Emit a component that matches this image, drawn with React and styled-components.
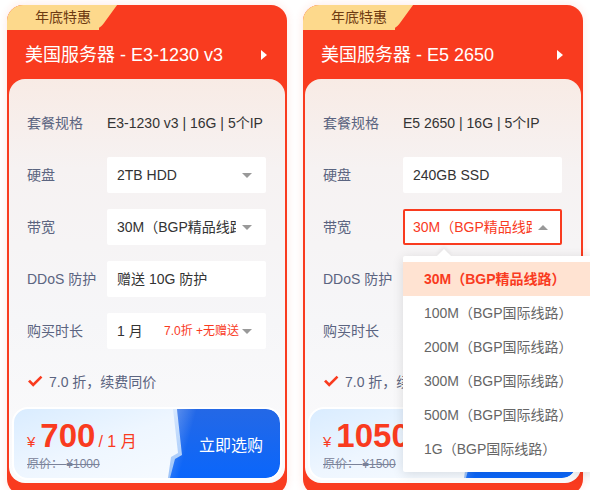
import styled, { createGlobalStyle } from "styled-components";

const GlobalStyle = createGlobalStyle`
  html, body {
    margin: 0;
    padding: 0;
    background: #fff;
    overflow: hidden;
  }
  body {
    font-family: "Liberation Sans", "Noto Sans CJK SC", sans-serif;
  }
`;

const RED = "#f93b1f";

const Page = styled.div`
  display: flex;
  align-items: flex-start;
  gap: 16px;
  padding: 5px 7px 0;
  width: 576px;
`;

const CardBox = styled.section`
  position: relative;
  flex: none;
  width: 280px;
  background: ${RED};
  border-radius: 16px;
  padding-bottom: 12px;
  box-shadow: 0 0 10px rgba(249, 59, 31, 0.12);
`;

const Tag = styled.div`
  position: relative;
  width: 92px;
  height: 25px;
  box-sizing: border-box;
  padding-left: 28px;
  background: #fdd98c;
  border-top-left-radius: 16px;
  color: #6e3b12;
  font-size: 14px;
  line-height: 25px;

  &::after {
    content: "";
    position: absolute;
    top: 0;
    right: -9px;
    width: 20px;
    height: 100%;
    background: #fdd98c;
    border-bottom-right-radius: 6px;
    transform: skewX(-36deg);
  }
  span {
    position: relative;
    z-index: 1;
  }
`;

const Header = styled.div`
  display: flex;
  align-items: center;
  justify-content: space-between;
  height: 49px;
  padding: 0 20px 0 18px;
`;

const Title = styled.h2`
  margin: 0;
  color: #fff;
  font-size: 18px;
  font-weight: 400;
  line-height: 1;
  white-space: nowrap;
`;

const HeaderArrow = styled.span`
  width: 0;
  height: 0;
  border-top: 5px solid transparent;
  border-bottom: 5px solid transparent;
  border-left: 6px solid #fff;
`;

const Panel = styled.div`
  margin: 0 2px;
  border-radius: 16px;
  padding-bottom: 3px;
  background: linear-gradient(180deg, #f8ebe5 0%, #f6f2f2 22%, #f6f6f8 60%, #fbfbfc 100%);
`;

const Body = styled.div`
  display: grid;
  grid-template-columns: minmax(0, 1fr);
  gap: 16px;
  padding: 26px 19px 0 18px;
`;

const Row = styled.div`
  display: flex;
  align-items: center;
  height: 36px;
  min-width: 0;
`;

const Label = styled.span`
  flex: none;
  width: 80px;
  color: #5b6480;
  font-size: 14px;
  line-height: 20px;
`;

const Spec = styled.span`
  color: #333;
  font-size: 14px;
  line-height: 20px;
  white-space: nowrap;
`;

const Select = styled.div`
  position: relative;
  flex: 1;
  min-width: 0;
  display: flex;
  align-items: center;
  height: 36px;
  box-sizing: border-box;
  padding: 0 12px 0 8px;
  background: #fff;
  border: 2px solid ${({ $active }) => ($active ? RED : "#fff")};
  border-radius: 2px;
  color: ${({ $active }) => ($active ? RED : "#333")};
  font-size: 14px;
  line-height: 20px;
`;

const SelectText = styled.span`
  flex: 1;
  min-width: 0;
  overflow: hidden;
  white-space: nowrap;
  margin-right: 6px;
`;

const Discount = styled.span`
  flex: none;
  color: ${RED};
  font-size: 12px;
  margin-right: 3px;
  white-space: nowrap;
`;

const Caret = styled.span`
  flex: none;
  width: 0;
  height: 0;
  border-left: 5px solid transparent;
  border-right: 5px solid transparent;
  ${({ $up }) =>
    $up ? "border-bottom: 5px solid #999;" : "border-top: 5px solid #999;"}
`;

const Dropdown = styled.ul`
  position: absolute;
  z-index: 10;
  top: calc(100% + 13px);
  left: -2px;
  width: 200px;
  margin: 0;
  padding: 6px 0;
  list-style: none;
  background: #fff;
  border-radius: 2px;
  box-shadow: 0 2px 12px rgba(0, 0, 0, 0.12);

  &::before {
    content: "";
    position: absolute;
    top: -5px;
    left: 36px;
    width: 10px;
    height: 10px;
    background: #fff;
    transform: rotate(45deg);
    box-shadow: -2px -2px 4px rgba(0, 0, 0, 0.05);
  }
`;

const Option = styled.li`
  position: relative;
  height: 34px;
  padding-left: 21px;
  line-height: 34px;
  font-size: 14px;
  white-space: nowrap;
  color: ${({ $selected }) => ($selected ? RED : "#666")};
  font-weight: ${({ $selected }) => ($selected ? 700 : 400)};
  background: ${({ $selected }) => ($selected ? "#ffe3d2" : "transparent")};
`;

const Note = styled.div`
  display: flex;
  align-items: center;
  gap: 6px;
  height: 20px;
  margin-top: 6px;
  color: #5b6480;
  font-size: 14px;
`;

const PriceBar = styled.div`
  display: flex;
  height: 73px;
  box-sizing: border-box;
  margin: 16px 3px 0;
  border: 2px solid #fff;
  border-radius: 16px;
  overflow: hidden;
  background: linear-gradient(160deg, #d9ecff 0%, #eef6ff 40%, #fbfdff 100%);
`;

const PriceInfo = styled.div`
  flex: 1;
  display: flex;
  flex-direction: column;
  justify-content: center;
  padding: 4px 0 0 13px;
`;

const PriceLine = styled.div`
  display: flex;
  align-items: baseline;
  color: ${RED};
  white-space: nowrap;
`;

const Yen = styled.span`
  font-size: 15px;
  margin-right: 5px;
`;

const Amount = styled.span`
  font-size: 33px;
  font-weight: 700;
  line-height: 34px;
`;

const Unit = styled.span`
  font-size: 16px;
  margin-left: 3px;
`;

const Original = styled.span`
  margin-top: 3px;
  color: #7a8299;
  font-size: 12px;
  line-height: 16px;
  text-decoration: line-through;
`;

const BuyButton = styled.button`
  position: relative;
  flex: none;
  width: 112px;
  border: 0;
  padding: 0 0 0 14px;
  background: transparent;
  color: #fff;
  font-family: inherit;
  font-size: 16px;
  border-radius: 0 14px 14px 0;
  overflow: hidden;

  &::before {
    content: "";
    position: absolute;
    inset: 0;
    background: linear-gradient(180deg, #d7e8ff 0%, #9cc3f8 100%);
    clip-path: polygon(5px 0, 30px 0, 12px 100%, 0 100%, 3px 48px, 10px 44px);
  }
  &::after {
    content: "";
    position: absolute;
    inset: 0;
    background:
      linear-gradient(105deg, rgba(255, 255, 255, 0.35) 0, rgba(255, 255, 255, 0) 28px),
      linear-gradient(180deg, #2468e6 0%, #0a66fb 100%);
    clip-path: polygon(9px 0, 100% 0, 100% 100%, 2px 100%, 7px 50px, 14px 46px);
  }
  span {
    position: relative;
    z-index: 1;
  }
`;

function CheckIcon() {
  return (
    <svg width="16" height="13" viewBox="0 0 16 13" aria-hidden="true">
      <path d="M1 6.5 L3 4.8 L6.2 8 L13.6 0.8 L15.4 2.4 L6.2 11.8 Z" fill={RED} />
    </svg>
  );
}

const BANDWIDTH = [
  "30M（BGP精品线路）",
  "100M（BGP国际线路）",
  "200M（BGP国际线路）",
  "300M（BGP国际线路）",
  "500M（BGP国际线路）",
  "1G（BGP国际线路）",
];

const PLANS = [
  {
    title: "美国服务器 - E3-1230 v3",
    spec: "E3-1230 v3 | 16G | 5个IP",
    disk: "2TB HDD",
    diskSelect: true,
    price: "700",
    original: "¥1000",
    open: false,
  },
  {
    title: "美国服务器 - E5 2650",
    spec: "E5 2650 | 16G | 5个IP",
    disk: "240GB SSD",
    diskSelect: false,
    price: "1050",
    original: "¥1500",
    open: true,
  },
];

function PlanCard({ plan }) {
  return (
    <CardBox>
      <Tag>
        <span>年底特惠</span>
      </Tag>
      <Header>
        <Title>{plan.title}</Title>
        <HeaderArrow />
      </Header>
      <Panel>
        <Body>
          <Row>
            <Label>套餐规格</Label>
            <Spec>{plan.spec}</Spec>
          </Row>
          <Row>
            <Label>硬盘</Label>
            <Select>
              <SelectText>{plan.disk}</SelectText>
              {plan.diskSelect && <Caret />}
            </Select>
          </Row>
          <Row>
            <Label>带宽</Label>
            <Select $active={plan.open}>
              <SelectText>{BANDWIDTH[0]}</SelectText>
              <Caret $up={plan.open} />
              {plan.open && (
                <Dropdown>
                  {BANDWIDTH.map((item, i) => (
                    <Option key={item} $selected={i === 0}>
                      {item}
                    </Option>
                  ))}
                </Dropdown>
              )}
            </Select>
          </Row>
          <Row>
            <Label>DDoS 防护</Label>
            <Select>
              <SelectText>赠送 10G 防护</SelectText>
            </Select>
          </Row>
          <Row>
            <Label>购买时长</Label>
            <Select>
              <SelectText>1 月</SelectText>
              <Discount>7.0折 +无赠送</Discount>
              <Caret />
            </Select>
          </Row>
          <Note>
            <CheckIcon />
            7.0 折，续费同价
          </Note>
        </Body>
        <PriceBar>
          <PriceInfo>
            <PriceLine>
              <Yen>¥</Yen>
              <Amount>{plan.price}</Amount>
              <Unit>/ 1 月</Unit>
            </PriceLine>
            <Original>原价： {plan.original}</Original>
          </PriceInfo>
          <BuyButton>
            <span>立即选购</span>
          </BuyButton>
        </PriceBar>
      </Panel>
    </CardBox>
  );
}

export default function App() {
  return (
    <>
      <GlobalStyle />
      <Page>
        {PLANS.map((plan) => (
          <PlanCard key={plan.title} plan={plan} />
        ))}
      </Page>
    </>
  );
}
